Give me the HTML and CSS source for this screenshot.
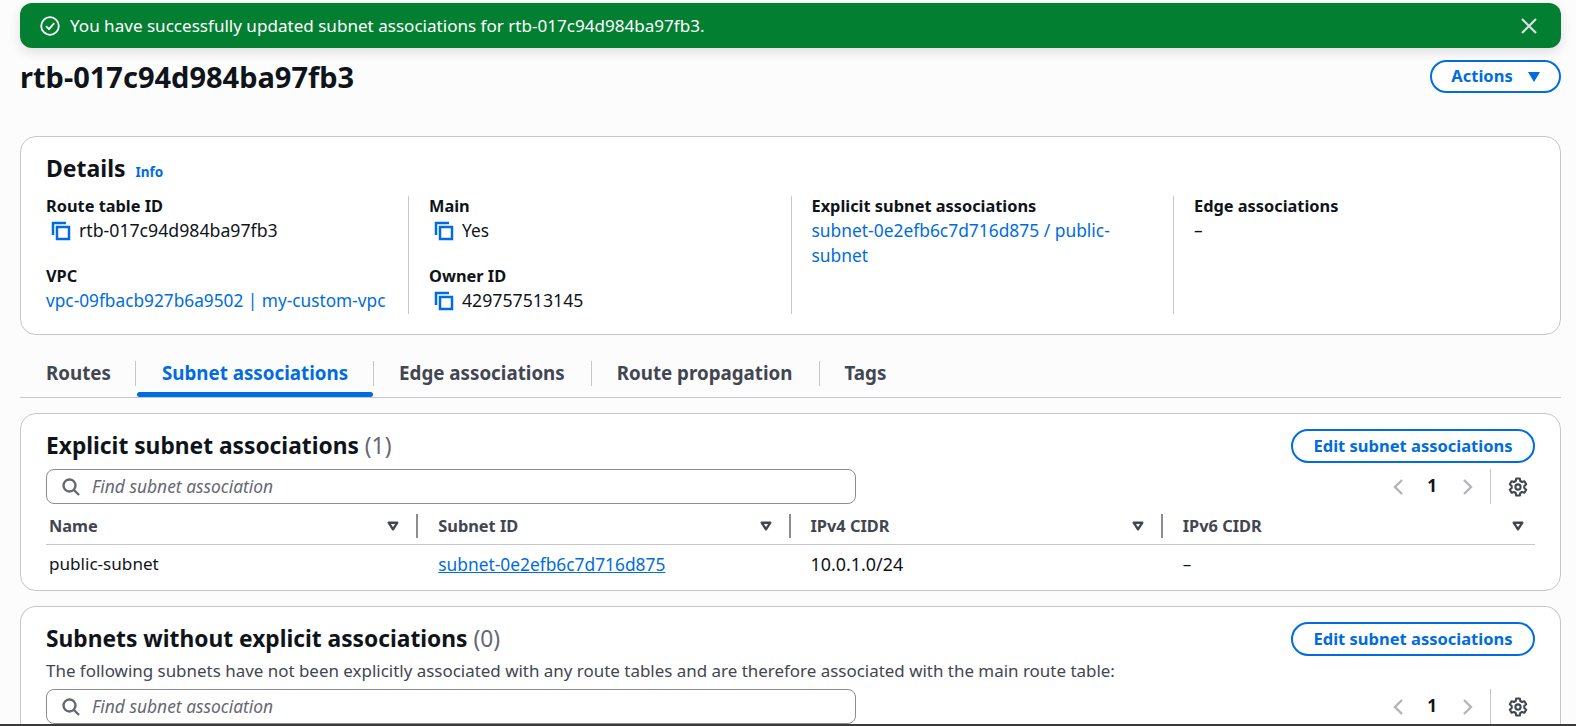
FILE: index.html
```html
<!DOCTYPE html>
<html lang="en">
<head>
<meta charset="utf-8">
<title>rtb-017c94d984ba97fb3</title>
<link rel="stylesheet" href="styles.css">
</head>
<body>
<svg class="defs" width="0" height="0" aria-hidden="true">
  <symbol id="copy" viewBox="0 0 20 20"><path d="M2 14V2h13M6 6h12v12H6z" fill="none" stroke="currentColor" stroke-width="2.5"/></symbol>
  <symbol id="sort" viewBox="0 0 12 10"><path d="M1.700 1.700h8.600L6 8.300z" fill="none" stroke="currentColor" stroke-width="2.400" stroke-linejoin="round"/></symbol>
  <symbol id="search" viewBox="0 0 18 18"><circle cx="7.500" cy="7.500" r="6" fill="none" stroke="currentColor" stroke-width="2.4"/><path d="M12 12l5 5" fill="none" stroke="currentColor" stroke-width="2.4"/></symbol>
  <symbol id="gear" viewBox="0 0 20 20"><circle cx="10" cy="10" r="2.600" fill="none" stroke="currentColor" stroke-width="2.100"/><path d="M8.200 1.500h3.600l.5 2.500 1.700 1 2.400-.8 1.800 3.100-1.900 1.700v2l1.900 1.700-1.800 3.100-2.400-.8-1.700 1-.5 2.500H8.200l-.5-2.500-1.700-1-2.400.8-1.800-3.100L3.700 11V9L1.800 7.300l1.800-3.100 2.400.8 1.700-1z" fill="none" stroke="currentColor" stroke-width="2.100" stroke-linejoin="round"/></symbol>
</svg>
<div class="frame">
  <div class="flash">
    <svg class="flash-icon" viewBox="0 0 20 20"><circle cx="10" cy="10" r="8.800" fill="none" stroke="currentColor" stroke-width="1.800"/><path d="M6 10.200l3 3 5.200-6" fill="none" stroke="currentColor" stroke-width="1.800"/></svg>
    <span class="flash-text">You have successfully updated subnet associations for rtb-017c94d984ba97fb3.</span>
    <svg class="flash-close" viewBox="0 0 16 16"><path d="M1 1l14 14M15 1L1 15" fill="none" stroke="currentColor" stroke-width="2.200"/></svg>
  </div>

  <header class="page-head">
    <h1 class="page-title">rtb-017c94d984ba97fb3</h1>
    <button class="btn btn-actions"><span class="btn-label">Actions</span> <svg class="caret" viewBox="0 0 12 10"><path d="M0 0h12L6 10z" fill="currentColor"/></svg></button>
  </header>

  <section class="card details">
    <h2 class="details-title">Details <a class="info">Info</a></h2>
    <div class="details-grid">
      <div class="col">
        <div class="field">
          <div class="label">Route table ID</div>
          <div class="value num"><svg class="copy"><use href="#copy"/></svg>rtb-017c94d984ba97fb3</div>
        </div>
        <div class="field">
          <div class="label">VPC</div>
          <div class="value"><a class="link">vpc-09fbacb927b6a9502 | my-custom-vpc</a></div>
        </div>
      </div>
      <div class="col">
        <div class="field">
          <div class="label">Main</div>
          <div class="value"><svg class="copy"><use href="#copy"/></svg>Yes</div>
        </div>
        <div class="field">
          <div class="label">Owner ID</div>
          <div class="value num"><svg class="copy"><use href="#copy"/></svg>429757513145</div>
        </div>
      </div>
      <div class="col">
        <div class="field">
          <div class="label">Explicit subnet associations</div>
          <div class="value wrap"><a class="link">subnet-0e2efb6c7d716d875 / public-subnet</a></div>
        </div>
      </div>
      <div class="col">
        <div class="field">
          <div class="label">Edge associations</div>
          <div class="value">–</div>
        </div>
      </div>
    </div>
  </section>

  <nav class="tabs">
    <a class="tab">Routes</a>
    <a class="tab active">Subnet associations</a>
    <a class="tab">Edge associations</a>
    <a class="tab">Route propagation</a>
    <a class="tab">Tags</a>
  </nav>

  <section class="card panel">
    <div class="panel-head">
      <h2 class="panel-title">Explicit subnet associations <span class="count">(1)</span></h2>
      <button class="btn btn-edit">Edit subnet associations</button>
    </div>
    <div class="tools">
      <div class="search"><svg class="search-icon"><use href="#search"/></svg><span class="search-text">Find subnet association</span></div>
      <div class="pager">
        <svg class="chev" viewBox="0 0 12 16"><path d="M10 1L3 8l7 7" fill="none" stroke="currentColor" stroke-width="2.400"/></svg>
        <span class="page-num">1</span>
        <svg class="chev" viewBox="0 0 12 16"><path d="M2 1l7 7-7 7" fill="none" stroke="currentColor" stroke-width="2.400"/></svg>
        <span class="pager-sep"></span>
        <svg class="gear"><use href="#gear"/></svg>
      </div>
    </div>
    <table class="table">
      <thead>
        <tr>
          <th><div class="th"><span>Name</span><svg class="sort"><use href="#sort"/></svg></div></th>
          <th><div class="th"><span>Subnet ID</span><svg class="sort"><use href="#sort"/></svg></div></th>
          <th><div class="th"><span>IPv4 CIDR</span><svg class="sort"><use href="#sort"/></svg></div></th>
          <th><div class="th"><span>IPv6 CIDR</span><svg class="sort"><use href="#sort"/></svg></div></th>
        </tr>
      </thead>
      <tbody>
        <tr>
          <td>public-subnet</td>
          <td><a class="link underline">subnet-0e2efb6c7d716d875</a></td>
          <td class="num">10.0.1.0/24</td>
          <td>–</td>
        </tr>
      </tbody>
    </table>
  </section>

  <section class="card panel last">
    <div class="panel-head">
      <h2 class="panel-title">Subnets without explicit associations <span class="count">(0)</span></h2>
      <button class="btn btn-edit">Edit subnet associations</button>
    </div>
    <p class="panel-desc">The following subnets have not been explicitly associated with any route tables and are therefore associated with the main route table:</p>
    <div class="tools">
      <div class="search"><svg class="search-icon"><use href="#search"/></svg><span class="search-text">Find subnet association</span></div>
      <div class="pager">
        <svg class="chev" viewBox="0 0 12 16"><path d="M10 1L3 8l7 7" fill="none" stroke="currentColor" stroke-width="2.400"/></svg>
        <span class="page-num">1</span>
        <svg class="chev" viewBox="0 0 12 16"><path d="M2 1l7 7-7 7" fill="none" stroke="currentColor" stroke-width="2.400"/></svg>
        <span class="pager-sep"></span>
        <svg class="gear"><use href="#gear"/></svg>
      </div>
    </div>
  </section>
</div>
</body>
</html>
```
FILE: styles.css
```css
* { box-sizing: border-box; }
html, body { margin: 0; height: 726px; overflow: hidden; }
body {
  background: #fcfcfd;
  color: #0f141a;
  font: 17px/20px "Noto Sans", "Open Sans", sans-serif;
}
.defs { display: block; height: 0; }
.frame {
  height: 726px;
  padding: 3px 15px 0 20px;
  overflow: hidden;
  border-bottom: 2px solid #3a3a3a;
}
.flash {
  display: flex;
  align-items: center;
  height: 45px;
  padding: 0 24px 0 20px;
  background: #037f31;
  color: #fff;
  border-radius: 12px;
  box-shadow: 0 4px 12px rgba(0, 7, 22, .12);
  font-size: 17.070px;
}
.flash-icon { width: 20px; height: 20px; margin-right: 10px; }
.flash-text { flex: 1; }
.flash-close { width: 16px; height: 16px; color: #dedee3; }

.page-head {
  display: flex;
  justify-content: space-between;
  align-items: flex-start;
  height: 88px;
  padding-top: 12px;
}
.page-title { margin: 0; font-size: 29px; line-height: 34px; font-weight: 700; }

.btn {
  font: 700 16.500px/20px "Noto Sans", "Open Sans", sans-serif;
  background: #fff;
  color: #006ce0;
  border: 2px solid #006ce0;
  border-radius: 20px;
  white-space: nowrap;
}
.btn-actions {
  display: flex;
  align-items: center;
  justify-content: center;
  gap: 15px;
  width: 131px;
  height: 33px;
  padding: 0;
}
.btn-label { margin-bottom: 2px; }
.caret { width: 12px; height: 10px; }
.btn-edit { width: 244px; height: 34px; padding: 0; }

.card {
  background: #fff;
  border: 1px solid #c6c6cd;
  border-radius: 16px;
}
.details { height: 199px; padding: 16px 25px 0; }
.details-title { margin: 0 0 9px; font-size: 23px; line-height: 30px; font-weight: 700; }
.info { margin-left: 4px; font-size: 13.500px; color: #006ce0; }
.details-grid {
  display: grid;
  grid-template-columns: 362px repeat(3, 382.5px);
  margin-right: -25px;
}
.col { height: 118px; padding: 0 20px; border-left: 1px solid #c6c6cd; }
.col:first-child { padding-left: 0; border-left: 0; }
.field { height: 70px; }
.label { margin-bottom: 1px; font-weight: 700; line-height: 21px; font-size: 16.350px; }
.value { display: flex; align-items: center; line-height: 25px; font-size: 17.250px; white-space: nowrap; }
.value.wrap { display: block; white-space: normal; font-size: 17.400px; }
.value.num { font-size: 17.700px; }
.copy { width: 20px; height: 20px; margin: 0 8px 0 5px; color: #006ce0; }
.link { color: #006ce0; }
.underline { text-decoration: underline; }

.tabs {
  display: flex;
  height: 63px;
  padding-top: 19px;
  border-bottom: 1px solid #c6c6cd;
}
.tab {
  position: relative;
  height: 43px;
  padding: 0 26px;
  font-size: 18.750px;
  font-weight: 700;
  line-height: 38px;
  color: #424650;
}
.tab:first-child { padding-right: 24px; }
.tab + .tab::before {
  content: "";
  position: absolute;
  left: 0;
  top: 7px;
  height: 25px;
  border-left: 1px solid #c6c6cd;
}
.tab.active { padding: 0 25px 0 27px; color: #006ce0; }
.tab.active::after {
  content: "";
  position: absolute;
  left: 2px;
  right: 0;
  bottom: 0;
  height: 5px;
  background: #006ce0;
  border-radius: 3px;
}

.panel { margin-top: 15px; height: 178px; padding: 15px 25px 0; }
.panel-head { display: flex; justify-content: space-between; align-items: center; height: 34px; }
.panel-title { margin: 0 0 1px; font-size: 22.750px; line-height: 30px; font-weight: 700; }
.count { font-weight: 400; color: #656871; }
.panel-desc { margin: 5px 0 8px; font-size: 16.950px; color: #424650; }
.last { height: 140px; border-bottom: 0; border-radius: 16px 16px 0 0; }

.tools { display: flex; justify-content: space-between; align-items: center; margin-top: 6px; }
.panel-desc + .tools { margin-top: 0; }
.search {
  display: flex;
  align-items: center;
  width: 810px;
  height: 35px;
  padding-left: 15px;
  background: #fff;
  border: 1px solid #8c8c94;
  border-radius: 8px;
  font-style: italic;
  font-size: 17.400px;
  color: #656871;
}
.search-text { margin-bottom: 2px; }
.search-icon { width: 18px; height: 18px; margin-right: 12px; color: #656871; }
.pager { display: flex; align-items: center; height: 35px; color: #b4b4bb; }
.chev { width: 12px; height: 16px; }
.page-num { width: 58px; margin-bottom: 2px; padding-right: 2px; text-align: center; font-weight: 700; color: #0f141a; font-size: 17px; }
.pager-sep { height: 35px; margin: 0 17px 0 16px; border-left: 1px solid #c6c6cd; }
.gear { width: 20px; height: 20px; color: #424650; margin-right: 7px; }

.table { width: 100%; border-collapse: collapse; table-layout: fixed; }
.table th { padding: 4px 0 0; height: 40px; text-align: left; border-bottom: 1px solid #c6c6cd; color: #424650; font-size: 16.350px; }
.th { display: flex; align-items: center; justify-content: space-between; height: 24px; padding: 0 17px 0 20px; border-right: 2px solid #8c8c94; }
th:first-child .th { padding-left: 3px; }
th:last-child .th { border-right: 0; padding-right: 11px; }
.sort { width: 12px; height: 10px; color: #424650; }
.table td { padding: 0 0 0 20px; height: 40px; font-size: 17.100px; }
.table td:first-child { padding-left: 3px; }
.table td .link { font-size: 17.350px; }
.table td.num { font-size: 17.900px; }
```
